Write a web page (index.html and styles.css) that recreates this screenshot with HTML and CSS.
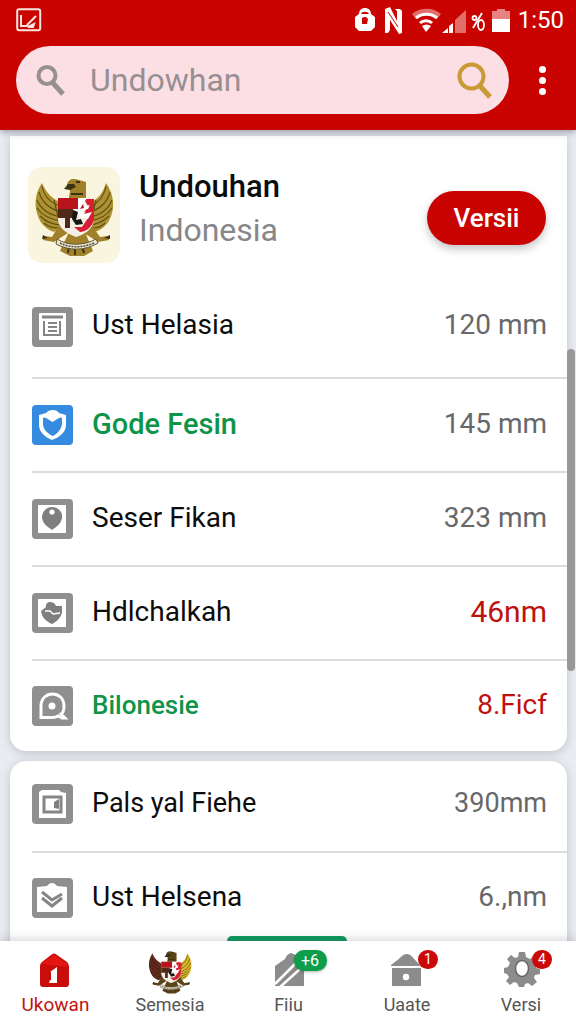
FILE: index.html
```
<!DOCTYPE html>
<html lang="id">
<head>
<meta charset="utf-8">
<meta name="viewport" content="width=device-width, initial-scale=1">
<title>Undouhan Indonesia</title>
<link rel="stylesheet" href="styles.css">
</head>
<body>
<svg class="defs" aria-hidden="true">
  <symbol id="garuda" viewBox="8 12 80 84">
    <g class="wing-left">
      <path d="M16 22C10 30 8 42 11 52C13 61 19 68 28 71L40 60L34 41C27 38 20 32 16 22Z"/>
      <path class="feather" d="M16 25C18 35 25 42 34 45M13 31C16 42 24 48 35 51M11 39C15 49 24 54 35 56M11 47C17 56 26 59 36 60M14 55C20 61 28 64 36 64M18 62C24 67 30 68 36 66M28 39L33 60"/>
    </g>
    <g class="wing-right">
      <path d="M80 22C86 30 89 42 86 52C84 61 78 68 69 71L59 60L65 41C72 38 77 32 80 22Z"/>
      <path class="feather" d="M80 25C78 35 73 42 64 45M84 31C81 42 74 48 64 51M86 39C82 49 74 54 64 56M86 47C80 56 72 59 63 60M83 55C77 61 70 64 62 64M79 62C74 67 68 68 62 66M70 39L65 60"/>
    </g>
    <path class="body" d="M43 36L44 30L41 24C42 18 47 17 53 19L60 21V42H44Z"/>
    <path class="ink" d="M42 23L38 28L44 29L50 26L48 23ZM45 32H57V34H45ZM46 37H58V38H46ZM50 20H54V22H50Z"/>
    <path class="body" d="M36 59L26 76L18 75L17 79L28 81L42 72ZM62 59L74 76L82 75L83 79L72 81L58 72ZM43 71H59L67 90L58 95H44L34 90Z"/>
    <path class="ink" d="M17 74L22 77L16 78ZM84 74L78 77L84 78ZM42 84L41 92H43L44 84ZM48 85V94H50V85ZM55 85L57 92H59L57 84ZM34 42L38 38L41 42V62L37 57Z"/>
    <path fill="#f4efe6" d="M32 37H68V59C67 68 58 74 50 76C42 73 33 68 32 59Z"/>
    <path fill="#b7141d" d="M32 37H52V48H32Z"/>
    <path fill="#4f2a19" d="M32 48H47V57H32ZM39 54H44V67H39Z"/>
    <path fill="#d81e32" d="M58 38H68V59C66 66 60 71 54 71L48 66H56L62 57L57 51L63 47Z"/>
    <path fill="#fff" d="M52 37H61L55 46L64 44L58 53L66 51L62 58L52 55Z"/>
    <path fill="#b7141d" d="M57 43L54 48L58 47ZM61 48L58 51L62 50Z"/>
    <path fill="#181613" d="M47 49L52 51L50 59L55 58L57 63L50 64L46 58Z"/>
    <path class="ribbon" d="M31 78C42 85 58 85 70 78L72 82C59 90 43 90 30 83Z"/>
    <path fill="none" stroke="#4a4433" stroke-width="1.5" stroke-dasharray="2 1" d="M34 82C44 87 57 87 68 82"/>
  </symbol>
</svg>

<div class="screen">
  <header class="top-bar">
    <div class="status">
      <svg class="shot" viewBox="0 0 26 24" aria-hidden="true"><rect x="1.200" y="1.200" width="23" height="21" rx="2"/><path d="M5 7V18H12M20 8L11 17M12 19L18 16L17 19Z"/></svg>
      <svg class="status-icons" viewBox="0 0 158 28" aria-hidden="true">
        <path fill="#fff" d="M5 8C5 4 8 2 11 2C14 2 17 4 17 8L21 11V21L17 25H5L1 21V11Z"/><path fill="#c90400" d="M7 8C8 5 14 5 15 8ZM8 12L10 11H12L14 13L13 18H8Z"/>
        <path fill="#fff" d="M31 3L36 1L43 15V5L41 3L46 3L48 5V27L45 28L36 14V24L34 27L31 27Z"/><path fill="none" stroke="#c90400" d="M34 6L44 21M39 6L43 10M36 19L40 23"/>
        <path fill="#e36d69" d="M58 8C66 1 79 1 87 8L83 13C77 8 68 8 62 13Z"/>
        <path fill="none" stroke="#fff" stroke-width="3" d="M62 12C68 7 77 7 83 12M66 17C69 14 75 14 78 17"/><path fill="#fff" d="M68 20C71 18 74 18 77 20L72 26Z"/>
        <path fill="#fff" d="M88 27L94 22V27ZM95 20L99 17V27H95Z"/><path fill="#e36d69" d="M101 14L112 4V27H101Z"/>
        <g fill="none" stroke="#fff" stroke-width="1.800"><path d="M128 7L119 22"/><circle cx="120.500" cy="12" r="2"/><ellipse cx="127" cy="19" rx="3" ry="5"/></g>
        <path fill="#e78481" d="M138 5H143V3H151V5H156V13H138Z"/><path fill="#fff" d="M138 13H156V26H138Z"/>
      </svg>
      <time class="clock">1:50</time>
    </div>
    <div class="search-row">
      <form class="search" role="search">
        <svg class="lens" viewBox="0 0 32 32" aria-hidden="true"><circle cx="11" cy="11.500" r="8.500"/><path class="thick" d="M16 18L27 30"/></svg>
        <input class="search-input" type="search" aria-label="Cari" placeholder="Undowhan">
        <button class="search-go" type="button" aria-label="Cari"><svg viewBox="0 0 36 38" aria-hidden="true"><circle cx="14.500" cy="15.500" r="12"/><path class="thick" d="M23 25L33 36"/></svg></button>
      </form>
      <button class="more" type="button" aria-label="Menu"><i></i><i></i><i></i></button>
    </div>
  </header>

  <main class="content">
    <section class="card card-app">
      <div class="app">
        <span class="app-icon"><svg aria-hidden="true"><use href="#garuda"/></svg></span>
        <div class="app-text"><h1>Undouhan</h1><p>Indonesia</p></div>
        <button class="install" type="button">Versii</button>
      </div>
      <ul class="list">
        <li class="row">
          <svg class="tile" viewBox="0 0 41 40" aria-hidden="true"><rect class="bg" width="41" height="40" rx="4"/><path class="w" d="M7 7Q7 6 8 6H33Q34 6 34 7V32Q34 33 33 33H8Q7 33 7 32Z"/><path class="s" d="M10 10H31"/><path class="s thin" d="M12 14V28H28V14M16 16H25M16 20H25M16 24H25"/></svg>
          <span class="name">Ust Helasia</span><span class="size">120 mm</span>
        </li>
        <li class="row">
          <svg class="tile blue" viewBox="0 0 41 40" aria-hidden="true"><rect class="bg" width="41" height="40" rx="4"/><path class="w" d="M7 10L14 8C17 4 25 4 27 8L34 10V20C34 27 28 32 20 35C13 32 7 27 7 20Z"/><path class="g" d="M11 13Q12 12 14 13L20.500 17L27 13Q29 12 30 13V19C29 25 25 29 20.500 31C15 28 11 24 11 19Z"/></svg>
          <span class="name green wide-name">Gode Fesin</span><span class="size">145 mm</span>
        </li>
        <li class="row">
          <svg class="tile" viewBox="0 0 41 40" aria-hidden="true"><rect class="bg" width="41" height="40" rx="4"/><path class="w" d="M6 6H34V34H6Z"/><path class="g" d="M20 8C26 8 31 13 30 19C29 25 24 28 20 31C16 28 11 25 10 19C10 13 14 8 20 8Z"/><circle class="w" cx="20" cy="13" r="2.600"/></svg>
          <span class="name">Seser Fikan</span><span class="size">323 mm</span>
        </li>
        <li class="row">
          <svg class="tile" viewBox="0 0 41 40" aria-hidden="true"><rect class="bg" width="41" height="40" rx="4"/><path class="w" d="M6 6H34V34H6Z"/><path class="g" d="M9 18L14 14C13 8 22 7 24 13L30 13V20C28 26 24 29 20 31C15 29 10 25 9 18Z"/><path fill="none" stroke="#fff" stroke-width="1.500" d="M13 18L18 18L21 21L28 20"/></svg>
          <span class="name">Hdlchalkah</span><span class="size red large">46nm</span>
        </li>
        <li class="row">
          <svg class="tile" viewBox="0 0 41 40" aria-hidden="true"><rect class="bg" width="41" height="40" rx="4"/><path fill="none" stroke="#fff" stroke-width="3" d="M20 31.500H9V20C9 4 32 4 32 20C32 25 31 27 29 28L33 32H30L26 30C24 31.500 22 31.500 20 31.500Z"/><circle cx="20" cy="20" r="3.500" class="w"/></svg>
          <span class="name green narrow-name">Bilonesie</span><span class="size red">8.Ficf</span>
        </li>
      </ul>
    </section>
    <section class="card card-more">
      <ul class="list">
        <li class="row">
          <svg class="tile" viewBox="0 0 41 40" aria-hidden="true"><rect class="bg" width="41" height="40" rx="4"/><path class="w" d="M7 8L10 6H27L29 8L34 9V34H7Z"/><path class="s" d="M12 13H29V28H12Z"/><path class="g" d="M22 18L27 15V25L22 24Z"/></svg>
          <span class="name">Pals yal Fiehe</span><span class="size">390mm</span>
        </li>
        <li class="row">
          <svg class="tile" viewBox="0 0 41 40" aria-hidden="true"><rect class="bg" width="41" height="40" rx="4"/><path class="w" d="M5 9L15 8C18 4 22 4 25 8L35 9V34H5Z"/><path class="s" d="M10 14L20 22L30 16M10 20L20 28L30 20"/></svg>
          <span class="name">Ust Helsena</span><span class="size">6.,nm</span>
        </li>
      </ul>
    </section>
    <span class="scroll-thumb"></span>
    <span class="peek"></span>
  </main>

  <nav class="tabs">
    <a class="tab active" href="#ukowan"><span class="tab-icon"><svg viewBox="0 0 46 40" aria-hidden="true"><path fill="#c80d0b" d="M7 18C7 16 8 15 9 14L18 7C20 5 22 5 24 7L34 14C35 15 36 17 36 19V36Q36 39 33 39H10Q7 39 7 36Z"/><path fill="#e51514" d="M8 16L21 7L34 16V19Z"/><path fill="#fff" d="M17 24L24 19V35H16L17 32H18V24Z"/></svg></span>Ukowan</a>
    <a class="tab" href="#semesia"><span class="tab-icon"><svg class="emblem" aria-hidden="true"><use href="#garuda"/></svg></span>Semesia</a>
    <a class="tab" href="#fiiu"><span class="tab-icon"><svg viewBox="0 0 46 40" aria-hidden="true"><path fill="#8c8c8c" d="M9 18L19 11Q21 6 25 5L30 7L38 17V38H9Z"/><path stroke="#fff" stroke-width="2.500" d="M9 36L31 14M13 40L34 21"/></svg><b class="badge wide">+6</b></span>Fiiu</a>
    <a class="tab" href="#uaate"><span class="tab-icon"><svg viewBox="0 0 46 40" aria-hidden="true"><path fill="#8c8c8c" d="M7 17L12 13C16 11 18 6 23 6C27 6 30 11 33 14L36 17V18H7ZM8 20H37V38H8Z"/><circle cx="22" cy="29" r="3.200" fill="#fff"/></svg><b class="badge">1</b></span>Uaate</a>
    <a class="tab" href="#versi"><span class="tab-icon"><svg viewBox="0 0 46 40" aria-hidden="true"><path fill="#8c8c8c" d="M21 4H27L28 9L32 11L36 8L39 12L37 16L38 20L42 21V26L37 27L36 30L39 34L34 38L30 35L27 36L26 39H21L19 35L16 34L12 37L8 33L11 29L9 26L6 25V20L10 19L12 15L9 11L13 7L17 10L20 9Z"/><ellipse cx="24" cy="20.500" rx="6.500" ry="8" fill="#fff" stroke="#666" stroke-width="1.500"/></svg><b class="badge">4</b></span>Versi</a>
  </nav>
</div>
</body>
</html>
```

FILE: styles.css
```
* { box-sizing: border-box; }
body {
  margin: 0;
  font-family: Roboto, "Liberation Sans", sans-serif;
  color: #0c0c0c;
  background: #e9ecf1;
}
h1, p, ul { margin: 0; padding: 0; }
button { border: 0; padding: 0; font: inherit; cursor: pointer; }
svg { display: block; }
.defs { position: absolute; width: 0; height: 0; }

.screen { display: flex; flex-direction: column; height: 100vh; }

/* Header */
.top-bar {
  position: relative;
  z-index: 2;
  flex: none;
  padding-bottom: 16px;
  background: #c90400;
  box-shadow: 0 2px 7px rgba(60, 60, 70, .45);
}
.status { display: flex; align-items: center; height: 40px; padding: 0 12px 0 16px; margin-bottom: 6px; }
.shot { width: 26px; height: 24px; fill: none; stroke: #ffe4e0; stroke-width: 2; margin-right: auto; }
.status-icons { width: 158px; height: 28px; margin-right: 6px; }
.clock { color: #fff; font-size: 24px; line-height: 28px; }
.search-row { display: flex; align-items: center; padding-left: 16px; }
.search {
  flex: 1;
  min-width: 0;
  display: flex;
  align-items: center;
  height: 68px;
  padding: 0 16px 0 20px;
  border-radius: 34px;
  background: #fbdfe5;
}
.lens { width: 32px; height: 32px; fill: none; stroke: #978f92; stroke-width: 4; }
.lens .thick { stroke-width: 5; }
.search-input {
  flex: 1;
  min-width: 0;
  margin-left: 22px;
  padding: 0;
  border: 0;
  outline: 0;
  background: none;
  font: 32px/40px Roboto, "Liberation Sans", sans-serif;
}
.search-input::placeholder { color: #978f92; opacity: 1; }
.search-go { background: none; }
.search-go svg { width: 36px; height: 38px; fill: none; stroke: #c99a35; stroke-width: 4; }
.search-go .thick { stroke-width: 5; }
.more { width: 67px; height: 60px; display: grid; align-content: center; justify-items: center; gap: 4px; background: none; }
.more i { width: 7px; height: 7px; border-radius: 50%; background: #fff; }

/* Cards */
.content {
  position: relative;
  flex: 1;
  min-height: 0;
  overflow: hidden;
  padding: 6px 9px 0 10px;
}
.card {
  margin-bottom: 10px;
  border-radius: 16px;
  background: #fff;
  box-shadow: 0 2px 10px rgba(90, 100, 115, .3);
}
.card-app { border-radius: 0 0 16px 16px; }
.card-more { padding-bottom: 24px; }
.app { display: flex; align-items: center; padding: 30px 21px 12px 18px; }
.app-icon {
  display: grid;
  place-items: center;
  width: 92px;
  height: 96px;
  border-radius: 14px;
  background: #faf5df;
}
.app-icon svg { width: 88px; height: 84px; }
.app-text { flex: 1; margin-left: 19px; padding-bottom: 12px; }
.app-text h1 { font-size: 31px; line-height: 42px; font-weight: 500; }
.app-text p { font-size: 32px; line-height: 44px; color: #87878a; }
.install {
  width: 119px;
  height: 54px;
  margin-top: 6px;
  border-radius: 27px;
  background: #c90400;
  color: #fff;
  font-size: 26px;
  font-weight: 500;
  box-shadow: 0 4px 8px rgba(60, 60, 80, .3);
}
.list { list-style: none; padding-left: 22px; }
.row {
  display: flex;
  align-items: center;
  height: 94px;
  padding-right: 20px;
  border-bottom: 2px solid #dcdcde;
  font-size: 28px;
  line-height: 36px;
}
.card-app .row:first-child { height: 103px; }
.card-more .row:first-child { height: 92px; padding-bottom: 4px; font-size: 27px; }
.row:last-child { height: 90px; border-bottom: 0; }
.tile { flex: none; width: 41px; height: 40px; }
.tile .bg { fill: #8f8f8f; }
.tile .g { fill: #7f7f7f; }
.tile .w { fill: #fff; }
.tile .s { fill: none; stroke: #858585; stroke-width: 3; }
.tile .thin { stroke-width: 2; }
.blue .bg, .blue .g { fill: #348be0; }
.name { flex: 1; margin-left: 19px; padding-bottom: 3px; }
.wide-name { font-size: 29px; }
.narrow-name { font-size: 26px; }
.size { padding-bottom: 3px; color: #68686a; }
.green { color: #0e9449; font-weight: 500; }
.red { color: #bd120e; }
.large { font-size: 30px; }

.scroll-thumb {
  position: absolute;
  top: 27%;
  right: 1px;
  width: 8px;
  height: 322px;
  border-radius: 4px;
  background: #98989a;
}
.peek {
  position: absolute;
  bottom: 0;
  left: 50%;
  width: 120px;
  height: 5px;
  margin-left: -61px;
  border-radius: 8px 8px 0 0;
  background: #0e9b60;
}

/* Bottom navigation */
.tabs {
  position: relative;
  flex: none;
  display: grid;
  grid-template-columns: 111fr 118fr 119fr 118fr 110fr;
  padding: 7px 0;
  background: #fff;
  box-shadow: 0 -1px 10px rgba(60, 60, 70, .25);
}
.tab {
  display: flex;
  flex-direction: column;
  align-items: center;
  gap: 5px;
  color: #555;
  font-size: 18px;
  line-height: 24px;
  text-decoration: none;
}
.tab.active { color: #c1140f; font-size: 19px; }
.tab-icon { position: relative; width: 46px; height: 40px; }
.tab-icon svg { width: 46px; height: 40px; }
.tab-icon .emblem { height: 46px; }
.badge {
  position: absolute;
  top: 2px;
  left: 34px;
  width: 20px;
  height: 19px;
  border-radius: 10px;
  background: #cb0909;
  color: #fff;
  font-size: 14px;
  line-height: 19px;
  font-weight: 400;
  text-align: center;
}
.badge.wide { left: 28px; width: 33px; height: 21px; line-height: 21px; font-size: 16px; background: #0d9d4b; box-shadow: 0 1px 3px rgba(0, 0, 0, .3); }

/* Emblem */
.emblem { --left-wing: #5a2018; --right-wing: #d9b92a; --trim: #5c4419; }
.wing-left { fill: var(--left-wing, #ae9130); }
.wing-right { fill: var(--right-wing, #ae9130); }
.feather { fill: none; stroke: var(--trim, #5f5016); stroke-width: 1.2; }
.body { fill: var(--trim, #a08029); }
.ink { fill: #3b3414; }
.ribbon { fill: #eee8d4; stroke: #615735; stroke-width: 1; }
```
